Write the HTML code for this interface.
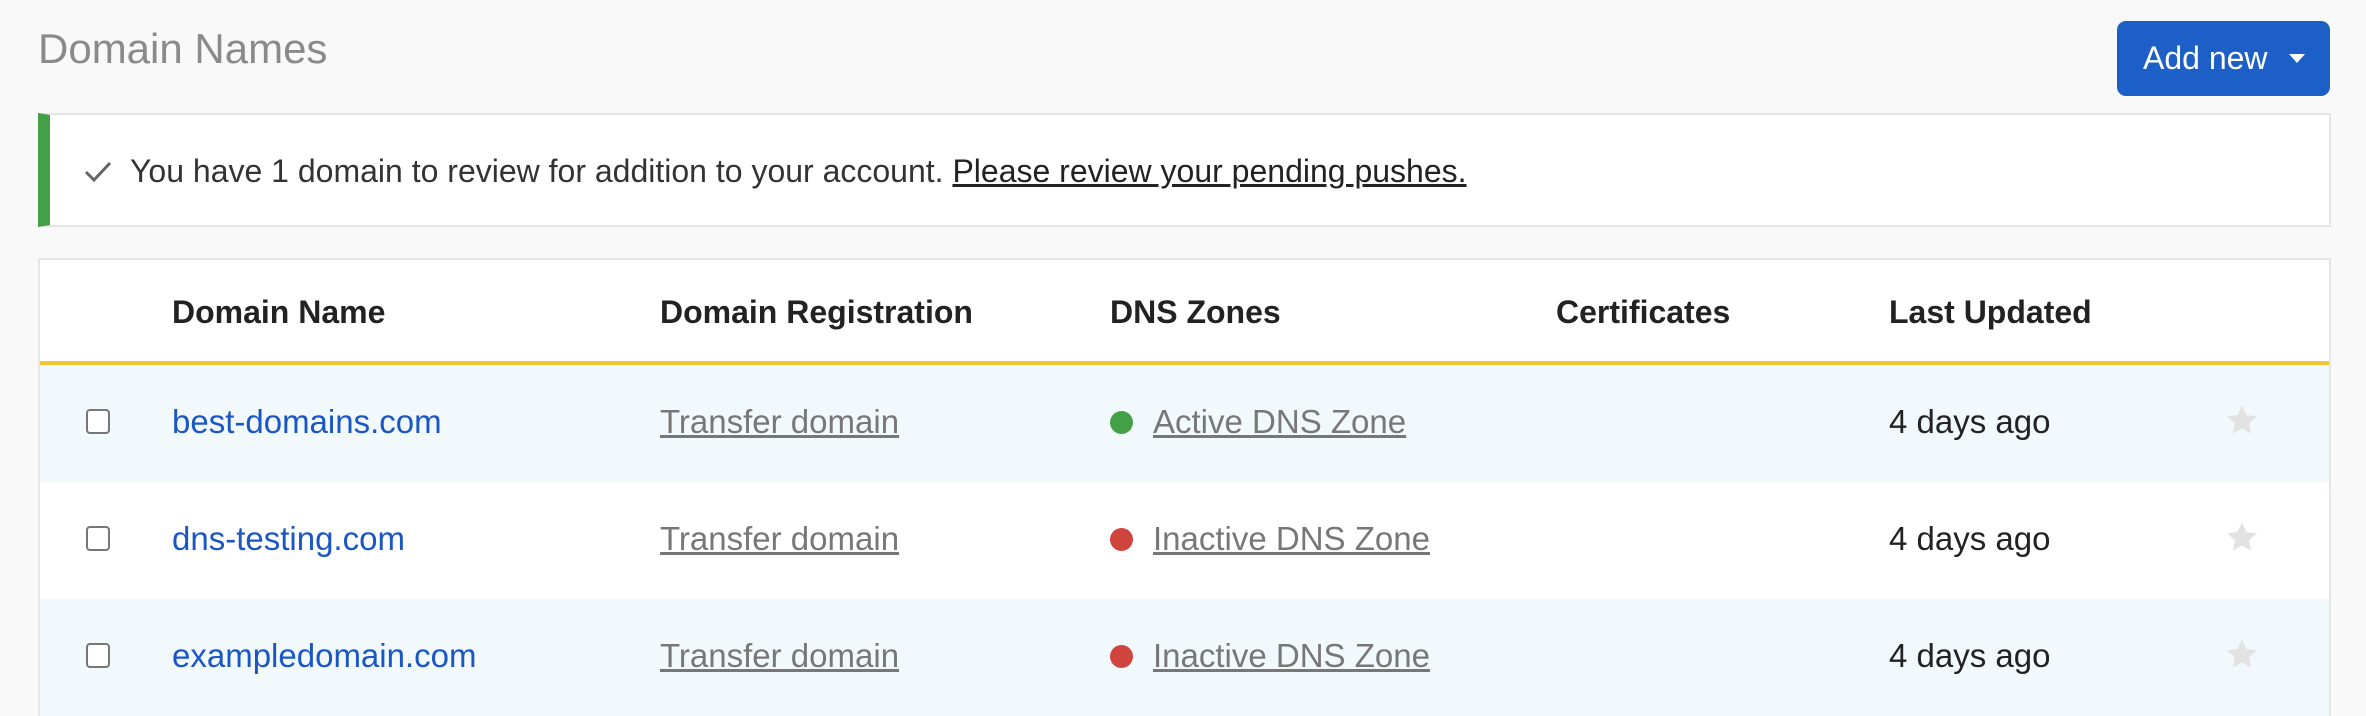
<!DOCTYPE html>
<html style="overflow:hidden;width:2366px;height:716px"><head><style>
*{margin:0;padding:0;box-sizing:border-box}
body{width:2366px;height:716px;background:#f9f9f9;font-family:"Liberation Sans",sans-serif;position:relative;overflow:hidden}
.a{position:absolute}
h1{position:absolute;left:38px;top:25px;font-size:42px;font-weight:normal;color:#8a8a8a}
.btn{left:2117px;top:21px;width:213px;height:75px;background:#1c5fc7;border-radius:9px;color:#fff;font-size:32px;line-height:75px;padding-left:26px}
.btn:after{content:"";position:absolute;left:172px;top:33px;border-left:8px solid transparent;border-right:8px solid transparent;border-top:9px solid #fff}
.alert{left:38px;top:113px;width:2293px;height:114px;background:#fff;border:2px solid #e4e4e4;border-left:12px solid #43a047;font-size:32px;color:#333;line-height:112px;padding-left:80px;white-space:nowrap}
.alert u{color:#222}
.card{left:38px;top:258px;width:2293px;height:458px;background:#fff;border:2px solid #e6e6e6;border-bottom:none}
.hd{position:absolute;top:294px;font-size:32px;font-weight:bold;color:#222}
.row{position:absolute;left:40px;width:2289px;height:117px}
.t{position:absolute;font-size:33px;line-height:36px;white-space:nowrap}
.cb{position:absolute;left:86px;width:24px;height:25px;border:2px solid #777;border-radius:4px;background:#fff}
.lk{color:#1a56c4;left:172px}
.tr{color:#777;text-decoration:underline;left:660px}
.dz{color:#777;text-decoration:underline;left:1153px}
.dot{position:absolute;left:1110px;width:23px;height:23px;border-radius:50%}
.dt{left:1889px;color:#222}
</style></head><body>
<h1>Domain Names</h1>
<div class="a btn">Add new</div>
<div class="a alert"><svg class="a" style="left:34px;top:45px" width="28" height="22" viewBox="0 0 28 22"><path d="M2 12l8 8L26 3" fill="none" stroke="#666" stroke-width="3"/></svg>You have 1 domain to review for addition to your account. <u>Please review your pending pushes.</u></div>
<div class="a card"></div>
<div class="hd" style="left:172px">Domain Name</div>
<div class="hd" style="left:660px">Domain Registration</div>
<div class="hd" style="left:1110px">DNS Zones</div>
<div class="hd" style="left:1556px">Certificates</div>
<div class="hd" style="left:1889px">Last Updated</div>
<div class="a" style="left:40px;top:361px;width:2289px;height:4px;background:#f6c431"></div>

<div class="row" style="top:365px;background:#f2f9fd"></div>
<div class="row" style="top:482px;background:#fff"></div>
<div class="row" style="top:599px;background:#f2f9fd"></div>

<div class="cb" style="top:409px"></div>
<div class="t lk" style="top:404px">best-domains.com</div>
<div class="t tr" style="top:404px">Transfer domain</div>
<div class="dot" style="top:411px;background:#43a047"></div>
<div class="t dz" style="top:404px">Active DNS Zone</div>
<div class="t dt" style="top:404px">4 days ago</div>

<div class="cb" style="top:526px"></div>
<div class="t lk" style="top:521px">dns-testing.com</div>
<div class="t tr" style="top:521px">Transfer domain</div>
<div class="dot" style="top:528px;background:#d0443e"></div>
<div class="t dz" style="top:521px">Inactive DNS Zone</div>
<div class="t dt" style="top:521px">4 days ago</div>

<div class="cb" style="top:643px"></div>
<div class="t lk" style="top:638px">exampledomain.com</div>
<div class="t tr" style="top:638px">Transfer domain</div>
<div class="dot" style="top:645px;background:#d0443e"></div>
<div class="t dz" style="top:638px">Inactive DNS Zone</div>
<div class="t dt" style="top:638px">4 days ago</div>

<svg class="a" style="left:2225px;top:404px" width="34" height="32" viewBox="0 0 24 23"><path d="M12 1l3.2 7 7.6.8-5.7 5.1 1.6 7.5L12 17.6 5.3 21.4l1.6-7.5L1.2 8.8 8.8 8z" fill="#e2e2e2"/></svg>
<svg class="a" style="left:2225px;top:521px" width="34" height="32" viewBox="0 0 24 23"><path d="M12 1l3.2 7 7.6.8-5.7 5.1 1.6 7.5L12 17.6 5.3 21.4l1.6-7.5L1.2 8.8 8.8 8z" fill="#e2e2e2"/></svg>
<svg class="a" style="left:2225px;top:638px" width="34" height="32" viewBox="0 0 24 23"><path d="M12 1l3.2 7 7.6.8-5.7 5.1 1.6 7.5L12 17.6 5.3 21.4l1.6-7.5L1.2 8.8 8.8 8z" fill="#e2e2e2"/></svg>
</body></html>
